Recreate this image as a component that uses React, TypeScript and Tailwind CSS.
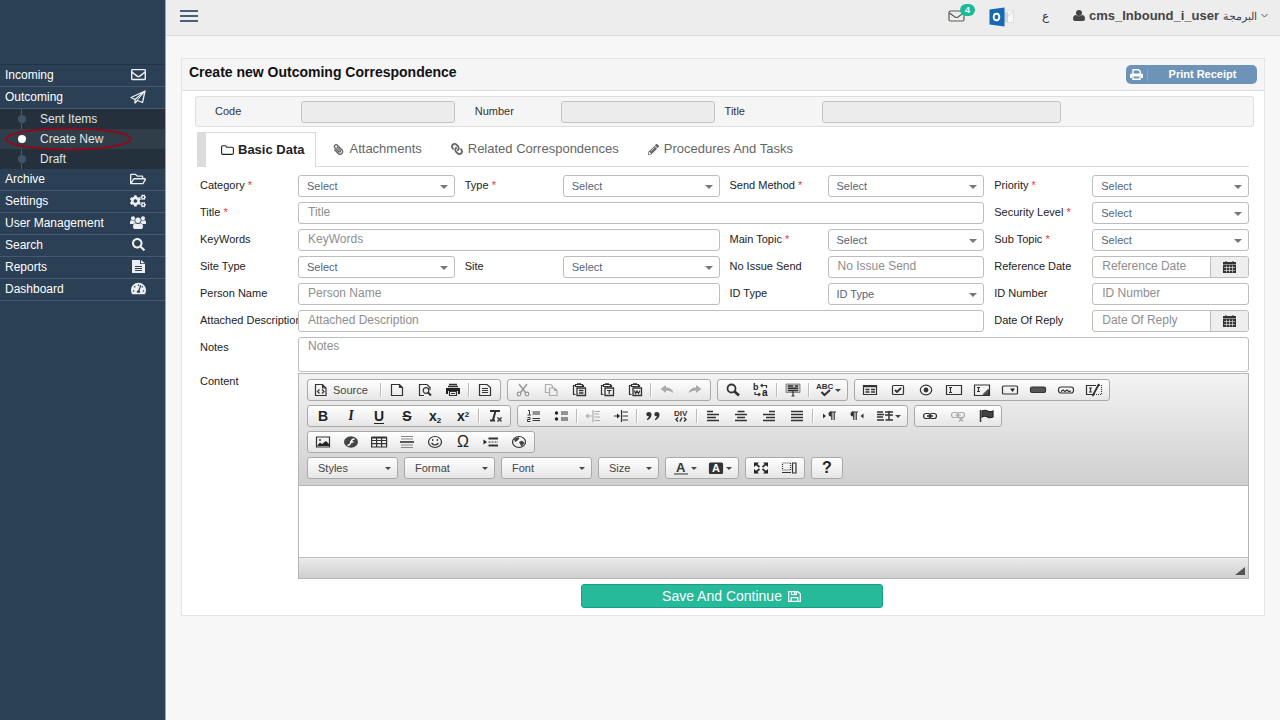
import React from 'react';
import {
  FaCogs,
  FaLink,
  FaPaperclip,
  FaPencilAlt,
  FaRegEnvelope,
  FaRegFolderOpen,
  FaSearch,
  FaTachometerAlt,
} from 'react-icons/fa';

/* ---------- Small icons ---------- */

const PlaneIcon = () => (
  <svg width="16" height="14" viewBox="0 0 16 14" fill="none" stroke="currentColor" strokeWidth="1.300" strokeLinejoin="round">
    <path d="M15 1L1 7.500l4 2V13l2.500-2.500 5 2zM15 1L5 9.500" />
    <path d="M15 1L7 10.500" strokeWidth="1" />
  </svg>
);

const UsersIcon = () => (
  <svg width="16" height="13" viewBox="0 0 16 13" fill="currentColor">
    <circle cx="3" cy="2.300" r="2" />
    <circle cx="13" cy="2.300" r="2" />
    <circle cx="8" cy="4.200" r="2.700" />
    <path d="M0 8V6q0-2 1.500-1.800 1.500.8 3 0Q4.500 6 5.500 7 4 7 3.500 8zM16 8V6q0-2-1.500-1.800-1.500.8-3 0 0 1.800-1 2.800 1.500 0 2 1z" />
    <path d="M3 11q0-3.700 2.300-3.700 2.700 1.600 5.400 0Q13 7.300 13 11q0 2-1.800 2H4.800Q3 13 3 11z" />
  </svg>
);

const FileIcon = () => (
  <svg width="14" height="13" viewBox="0 0 14 13">
    <path d="M1 0h8v4h5v9H1zM10 0l4 3.200h-4z" fill="currentColor" />
    <path d="M4 6.500h7M4 8.500h7M4 10.500h7" stroke="#2b3f55" />
  </svg>
);

const UserIcon = () => (
  <svg width="12" height="11" viewBox="0 0 12 11" fill="currentColor">
    <circle cx="6" cy="3" r="3" />
    <path d="M0 9q0-4 3-4 3 2.500 6 0 3 0 3 4 0 2-2 2H2q-2 0-2-2z" />
  </svg>
);

const PrintIcon = () => (
  <svg width="13" height="11" viewBox="0 0 13 11">
    <path d="M3 5V.7h5.500l1.800 1.800V5" fill="none" stroke="currentColor" strokeWidth="1.400" />
    <path d="M0 9V6q0-1.500 1.500-1.500h10Q13 4.500 13 6v3h-2V7.500H2V9z" fill="currentColor" />
    <path d="M3 7.500v2.800h7V7.500" fill="none" stroke="currentColor" strokeWidth="1.400" />
  </svg>
);

const FolderIcon = () => (
  <svg width="13" height="10" viewBox="0 0 13 10" fill="none" stroke="currentColor" strokeWidth="1.100">
    <path d="M.6 8V2Q.6.8 1.800.8h2.400q1 0 1.200 1.400h5.400q1.600 0 1.600 1.300V8q0 1.400-1.600 1.400H2Q.6 9.400.6 8z" />
  </svg>
);

const SaveIcon = () => (
  <svg width="13" height="11" viewBox="0 0 13 11" fill="none" stroke="currentColor" strokeWidth="1.200">
    <path d="M.7.7h9l2.600 2.200v7.400H.7z" />
    <path d="M3.200 10V6.700h6.600V10M3.500.7v3h5v-3" />
    <path d="M6 .8h1.500v2.400H6z" fill="currentColor" stroke="none" />
  </svg>
);

/* ---------- Sidebar ---------- */

interface MenuItem {
  label: string;
  icon: React.ReactNode;
  children?: string[];
}

const menu: MenuItem[] = [
  { label: 'Incoming', icon: <FaRegEnvelope size={15} /> },
  {
    label: 'Outcoming',
    icon: <PlaneIcon />,
    children: ['Sent Items', 'Create New', 'Draft'],
  },
  { label: 'Archive', icon: <FaRegFolderOpen size={16} /> },
  { label: 'Settings', icon: <FaCogs size={16} /> },
  { label: 'User Management', icon: <UsersIcon /> },
  { label: 'Search', icon: <FaSearch size={13} /> },
  { label: 'Reports', icon: <FileIcon /> },
  { label: 'Dashboard', icon: <FaTachometerAlt size={15} /> },
];

const SubMenu: React.FC<{ items: string[]; active: string }> = ({ items, active }) => (
  <ul className="relative bg-[#24303c]">
    <li className="absolute inset-y-0 left-[21px] w-px bg-[#4a5c6c]" aria-hidden="true" />
    {items.map((item) => (
      <li key={item} className={item === active ? 'relative bg-[#303e4a]' : 'relative'}>
        <a href="#" className="flex h-5 items-center gap-3.5 pl-[18px] text-[#e0e4e8]">
          <span
            className={
              item === active
                ? 'size-2 rounded-full bg-white'
                : 'size-2 rounded-full bg-[#425567]'
            }
          />
          {item}
        </a>
        {item === active && (
          <svg
            className="pointer-events-none absolute -top-0.5 left-[5px]"
            width="127"
            height="24"
            viewBox="0 0 127 24"
            fill="none"
            stroke="#8c0a1c"
            strokeWidth="2"
          >
            <ellipse cx="63.5" cy="12" rx="62" ry="10.5" />
          </svg>
        )}
      </li>
    ))}
  </ul>
);

const Sidebar: React.FC = () => (
  <aside className="w-[166px] shrink-0 border-r border-[#9aa6b2] bg-[#2b3f55] pt-16 text-xs text-white">
    <nav>
      <ul className="border-t border-[#22344a]">
        {menu.map((item) => (
          <li key={item.label}>
            <a
              href="#"
              className="flex h-[22px] items-center justify-between border-b border-[#435a70] pr-[19px] pb-0.5 pl-[5px]"
            >
              {item.label}
              <span className="flex w-4 justify-center text-[#eceff2]">{item.icon}</span>
            </a>
            {item.children && <SubMenu items={item.children} active="Create New" />}
          </li>
        ))}
      </ul>
    </nav>
  </aside>
);

/* ---------- Top bar ---------- */

const OutlookLogo = () => (
  <svg width="25" height="22" viewBox="0 0 25 22">
    <path d="M15 5.500h9.500v12H15z" fill="#f8f8f8" stroke="#e0e0e0" />
    <path d="M16 6.500l4 4 4.500-4.500" fill="none" stroke="#d4d4d4" />
    <path d="M15 7h4v10h-4z" fill="#cfd4da" />
    <path d="M.5 4.500L15.500 2.500v19L.5 19.500z" fill="#1568b3" />
    <ellipse cx="7.500" cy="12" rx="2.800" ry="3.300" fill="none" stroke="#fff" strokeWidth="1.900" />
  </svg>
);

const TopBar: React.FC = () => (
  <header className="flex h-9 items-center justify-between border-b border-[#dadde0] bg-[#ededed] pr-3 pb-1 pl-3.5">
    <button type="button" aria-label="Toggle menu" className="text-[#4a6078]">
      <svg width="18" height="12" viewBox="0 0 18 12" fill="currentColor">
        <path d="M0 0h18v2H0zM0 5h18v2H0zM0 10h18v2H0z" />
      </svg>
    </button>
    <div className="flex items-center">
      <button type="button" aria-label="Messages" className="relative mr-6">
        <svg width="17" height="12" viewBox="0 0 17 12" fill="none" stroke="#5c5a50" strokeWidth="1.200">
          <rect x="1" y="1" width="15" height="10" rx="1.500" />
          <path d="M1.500 3l5.500 4q1.500 1 3 0l5.500-4" />
        </svg>
        <span className="absolute -top-1.5 left-3 flex h-3 w-[15px] items-center justify-center rounded-full bg-[#1abb9c] text-[9px] leading-3 font-bold text-white">
          4
        </span>
      </button>
      <a href="#" aria-label="Outlook" className="mr-7">
        <OutlookLogo />
      </a>
      <a href="#" className="mr-6 text-xs text-[#333]">
        ع
      </a>
      <button type="button" className="flex items-center gap-1 text-[#444]">
        <UserIcon />
        <span className="text-[13px] leading-4 font-bold">cms_Inbound_i_user</span>
        <span className="text-[11px] leading-4">البرمجة</span>
        <svg width="7" height="5" viewBox="0 0 7 5" fill="none" stroke="#555">
          <path d="M.5 1l3 3 3-3" />
        </svg>
      </button>
    </div>
  </header>
);

/* ---------- Form fields ---------- */

interface FieldProps {
  id: string;
  label: string;
  required?: boolean;
  className?: string;
  children: React.ReactNode;
}

const Field: React.FC<FieldProps> = ({ id, label, required, className = '', children }) => (
  <div className={`flex min-w-0 ${className}`}>
    <label
      htmlFor={id}
      className="w-[98px] shrink-0 pt-0.5 text-[11px] leading-4 whitespace-nowrap text-[#222]"
    >
      {label} {required && <span className="text-[#e33]">*</span>}
    </label>
    {children}
  </div>
);

const inputClass =
  'h-[22px] w-full min-w-0 flex-1 rounded-[3px] border border-[#bdbdbd] bg-white px-[9px] pb-0.5 text-xs text-[#555] outline-none placeholder:text-[#8e8e8e]';

const TextField: React.FC<Omit<FieldProps, 'children'>> = (props) => (
  <Field {...props}>
    <input id={props.id} type="text" placeholder={props.label} className={inputClass} />
  </Field>
);

const SelectField: React.FC<Omit<FieldProps, 'children'> & { value?: string }> = ({
  value = 'Select',
  ...props
}) => (
  <Field {...props}>
    <div className="relative min-w-0 flex-1">
      <select
        id={props.id}
        className="block h-[22px] w-full appearance-none rounded-[3px] border border-[#bdbdbd] bg-white px-2 pt-px text-[11px] text-[#56657a] outline-none"
      >
        <option>{value}</option>
      </select>
      <svg
        className="pointer-events-none absolute top-2.5 right-[7px]"
        width="8"
        height="4"
        viewBox="0 0 8 4"
        fill="#777"
      >
        <path d="M0 0h8L4 4z" />
      </svg>
    </div>
  </Field>
);

const DateField: React.FC<Omit<FieldProps, 'children'>> = (props) => (
  <Field {...props}>
    <div className="flex h-[22px] min-w-0 flex-1 overflow-hidden rounded-[3px] border border-[#bdbdbd]">
      <input
        id={props.id}
        type="text"
        placeholder={props.label}
        className="w-full min-w-0 flex-1 px-[9px] pb-0.5 text-xs outline-none placeholder:text-[#8e8e8e]"
      />
      <button
        type="button"
        aria-label={`Pick ${props.label}`}
        className="flex w-[38px] items-center justify-center border-l border-[#bdbdbd] bg-[#eee]"
      >
        <svg width="13" height="12" viewBox="0 0 13 12">
          <path d="M0 1h13v2.500H0zM2.500 0h1v1h-1zM9.500 0h1v1h-1zM0 4h13v8H0z" fill="#333" />
          <path
            d="M1 6.500h11M1 9.500h11M3.500 4.500v7M6.500 4.500v7M9.500 4.500v7"
            stroke="#ddd"
            strokeWidth=".7"
          />
        </svg>
      </button>
    </div>
  </Field>
);

/* ---------- Rich text editor ---------- */

const Glyph: React.FC<{ children: React.ReactNode }> = ({ children }) => (
  <svg
    width="16"
    height="16"
    viewBox="0 0 16 16"
    fill="none"
    stroke="#333"
    strokeWidth="1.200"
    className="shrink-0 overflow-visible"
  >
    {children}
  </svg>
);

const clipboard = <path d="M4.500 12.500h-2v-9h2M11.500 3.500h1V5M4.500 2.500h7v2h-7zM6 1.800h4" />;

const icons: Record<string, React.ReactNode> = {
  source: (
    <>
      <path d="M2.500 2.500h7l3.500 3.500v7.500H2.500zM9.500 2.500V6H13" />
      <path d="M6.500 7.500l-2 2 2 2M9 7.500l2 2-2 2" />
    </>
  ),
  newpage: <path d="M2.500 2.500h8l3 3v8h-11zM10.500 2.500v3h3" />,
  preview: (
    <>
      <path d="M13 8V5.500l-3-3H2.500v11H7" />
      <circle cx="9" cy="8.500" r="2.800" />
      <path d="M11 10.500l3 3" strokeWidth="2" />
    </>
  ),
  print: (
    <>
      <path d="M4 2.500h8M3 4.500h10" strokeWidth="1.500" />
      <path d="M1 6h14v6h-2V9H3v3H1z" fill="#222" stroke="none" />
      <path d="M4.500 9.500h7v4h-7zM6 11.500h4" />
    </>
  ),
  template: <path d="M2.500 2.500H10l3.500 3v8h-11zM5 6.500h6M5 8.500h6M5 10.500h6" />,
  cut: (
    <g stroke="#999">
      <path d="M4 2l6.500 8.500M12 2L5.500 10.500" strokeWidth="1.500" />
      <circle cx="4" cy="12" r="1.800" />
      <circle cx="12" cy="12" r="1.800" />
    </g>
  ),
  copy: <path stroke="#aaa" d="M6 10.500H2.500v-8h5L9.500 4v2M6.500 6h5l2.500 2.500v5H6.500zM11.500 6v2.500H14" />,
  paste: (
    <>
      {clipboard}
      <path d="M6 6h8.500v7.500H6zM8 8.500h4.500M8 11h4.500" strokeWidth="1.300" />
    </>
  ),
  pastetext: (
    <>
      {clipboard}
      <path d="M6 6h8.500v7.500H6z" strokeWidth="1.300" />
      <path d="M8 8.500h4.500M10.200 8.500V12" />
    </>
  ),
  pasteword: (
    <>
      {clipboard}
      <path d="M6 6h8.500v7.500H6z" strokeWidth="1.300" />
      <path d="M7.500 8.500l1 3 1.500-2.500 1.500 2.500 1.500-3" />
    </>
  ),
  undo: (
    <path d="M1.500 7L7 3v2.500q6 0 7.500 5.500Q11.500 8.500 7 8.500V11z" fill="#aaa" stroke="none" />
  ),
  redo: (
    <path d="M14.500 7L9 3v2.500q-6 0-7.500 5.500Q4.500 8.500 9 8.500V11z" fill="#aaa" stroke="none" />
  ),
  find: (
    <>
      <circle cx="6.500" cy="6.500" r="4" strokeWidth="1.800" />
      <path d="M9.500 9.500l4.500 4" strokeWidth="2.800" />
    </>
  ),
  replace: (
    <>
      <text x="0" y="8" fontSize="9" fontWeight="bold" fill="#222" stroke="none">b</text>
      <text x="9" y="14" fontSize="10" fontWeight="bold" fill="#222" stroke="none">a</text>
      <path d="M13.500 6V3.500H8M9.500 2L8 3.500 9.500 5M2 10v2.500h5M5.500 11L7 12.500 5.500 14" />
    </>
  ),
  selectall: (
    <>
      <path d="M1 2h14v8.500H1z" fill="#bbb" stroke="#777" strokeWidth=".8" />
      <path d="M3 4h5M3 6.300h10M3 8.500h10M10 4h3" strokeWidth="1.400" />
      <path d="M8 8v6M6.500 14h3" />
    </>
  ),
  spell: (
    <>
      <text x="-1" y="7" fontSize="8" fontWeight="bold" fill="#333" stroke="none">ABC</text>
      <path d="M4.500 10l3 3 5.500-5" strokeWidth="2" />
    </>
  ),
  form: (
    <>
      <path d="M1.500 3.500h13v9h-13z" />
      <path d="M1.500 4.500h13M3.500 7.500h4M9 7.500h4M3.500 10h4M9 10h4" strokeWidth="1.600" />
    </>
  ),
  checkbox: (
    <>
      <rect x="2.500" y="3.500" width="11" height="9" rx="1" />
      <path d="M5 8l2 2 4-4" strokeWidth="1.800" />
    </>
  ),
  radio: (
    <>
      <ellipse cx="8" cy="8" rx="5.700" ry="4.800" />
      <circle cx="8" cy="8" r="2.400" fill="#333" stroke="none" />
    </>
  ),
  textfield: <path d="M.5 3.500h15v9H.5zM3 5.500h3M4.500 5.500v5M3 10.500h3" />,
  textarea: (
    <>
      <path d="M.5 3h15v10.500H.5zM3 5.500h3M4.500 5.500v4M3 9.500h3" />
      <path d="M14.500 8v5h-5zM9 12.500l5.500-5.500" fill="#555" strokeWidth="1" />
    </>
  ),
  select: (
    <>
      <rect x=".5" y="4" width="15" height="8" rx="1" />
      <path d="M8 6.500h5L10.500 10z" fill="#222" stroke="none" />
    </>
  ),
  button: <rect x=".5" y="5" width="15" height="5.500" rx="1.500" fill="#555" />,
  imagebutton: (
    <>
      <rect x=".5" y="5" width="15" height="6" rx="2.500" />
      <path d="M3 9.500l2-1.500 2 1.500 2-1.500 2 1.500 2-.5" />
    </>
  ),
  hidden: (
    <>
      <path d="M8 12.500H.5V3.500H10M3 6h3M4.500 6v4M3 10h3" />
      <path d="M11 3.500h4.500v9H8" strokeDasharray="1 1" />
      <path d="M13 2L6.500 14" strokeWidth="1.800" />
    </>
  ),
  clearformat: (
    <>
      <path d="M3 3h10M8.500 3L6 12M3 12.500h5" strokeWidth="2" />
      <path d="M10.500 9.500l4 4M14.500 9.500l-4 4" strokeWidth="1.400" />
    </>
  ),
  numbered: (
    <>
      <path d="M7.500 4h7.500M7.500 6h7.500M7.500 10.500h7.500M7.500 12.500h7.500" />
      <path d="M3 2.500h1.500V6.500M2.500 7h3.500M2.500 9.500H5v2H2.500V13.500H5.500" strokeWidth="1" />
    </>
  ),
  bulleted: (
    <>
      <path d="M8 4h7M8 6h7M8 10h7M8 12h7" />
      <circle cx="3.500" cy="5" r="1.700" fill="#222" stroke="none" />
      <circle cx="3.500" cy="11" r="1.700" fill="#222" stroke="none" />
    </>
  ),
  outdent: (
    <path stroke="#aaa" d="M8 2v12M9.500 3.500H15M9.500 6H14M9.500 9H15M9.500 12.500H15M1 8h6M3.500 6L1.500 8l2 2" />
  ),
  indent: (
    <>
      <path d="M8.500 2v12M9.500 4H15M9.500 8H15M9.500 12H15M1 8h5" />
      <path d="M4 5.500L7 8l-3 2.500z" fill="#222" stroke="none" />
    </>
  ),
  quote: (
    <path
      d="M3.800 4a2.500 2.200 0 00-2.500 2.200Q1.300 8.300 4 8.300 3.500 10 2 11v1.300Q6.500 10.500 6.500 6.500 6.500 4 3.800 4zM11.800 4a2.500 2.200 0 00-2.500 2.200q0 2.100 2.700 2.100-.5 1.700-2 2.700v1.300q4.500-1.800 4.500-5.800Q14.500 4 11.800 4z"
      fill="#333"
      stroke="none"
    />
  ),
  div: (
    <>
      <text x="1" y="8" fontSize="8" fontWeight="bold" fill="#333" stroke="none">DIV</text>
      <path d="M5 9.500L3 11.500l2 2M11 9.500l2 2-2 2M9 9.500l-2 4" strokeWidth="1.400" />
    </>
  ),
  left: <path d="M2 3.500h6M2 6.500h12M2 9.500h9M2 12.500h12" strokeWidth="1.700" />,
  center: <path d="M4.500 3.500h7M2 6.500h12M4 9.500h8M2 12.500h12" strokeWidth="1.700" />,
  right: <path d="M8 3.500h6M2 6.500h12M5 9.500h9M2 12.500h12" strokeWidth="1.700" />,
  justify: <path d="M2 3.500h12M2 6.500h12M2 9.500h12M2 12.500h12" strokeWidth="1.700" />,
  ltr: (
    <>
      <path d="M2 5.500L5 8l-3 2.500zM10.500 3.500H10a2.300 2.300 0 000 5h.5z" fill="#333" stroke="none" />
      <path d="M9 4h6M10.800 4v8M13.200 4v8" />
    </>
  ),
  rtl: (
    <>
      <path d="M14.500 5.500L11.500 8l3 2.500zM4.500 3.500H4a2.300 2.300 0 000 5h.5z" fill="#333" stroke="none" />
      <path d="M3 4h6M4.800 4v8M7.200 4v8" />
    </>
  ),
  language: (
    <path d="M0 4h6M0 6.500h7M0 9h6M0 12h7M8 4h8M8 7h8M12 3v9M8.500 12H16" strokeWidth="1.500" />
  ),
  link: (
    <>
      <rect x="1.500" y="5.500" width="7" height="5" rx="2.500" />
      <rect x="7.500" y="5.500" width="7" height="5" rx="2.500" />
      <path d="M5 8h6" strokeWidth="1.600" />
    </>
  ),
  unlink: (
    <g stroke="#aaa">
      <rect x="1.500" y="4.500" width="7" height="5" rx="2.500" />
      <rect x="7.500" y="4.500" width="7" height="5" rx="2.500" />
      <path d="M5 7h6M9 9.500l4 4M13 9.500l-4 4" />
    </g>
  ),
  flag: (
    <>
      <path d="M2.500 2v12" strokeWidth="1.500" />
      <path d="M4 3q3-1.500 5.500 0T15 3v6q-3 1.500-5.500 0T4 9z" fill="#444" stroke="#222" />
    </>
  ),
  image: (
    <>
      <path d="M1.500 3h13v10h-13z" />
      <path d="M2 12l3-3.500 2 1.500 4-3 3 3v2z" fill="#222" stroke="none" />
      <circle cx="5" cy="6" r="1" fill="#333" stroke="none" />
    </>
  ),
  flash: (
    <>
      <ellipse cx="8" cy="8" rx="7" ry="5.800" fill="#444" stroke="none" />
      <path d="M11.500 5q-3 0-3.500 3t-3.500 3.500M7 8h3.500" stroke="#fff" strokeWidth="1.500" />
    </>
  ),
  table: (
    <>
      <path d="M.6 3.500h15v9.500h-15zM.6 6.500h15M.6 9.700h15M5.600 3.500V13M10.600 3.500V13" />
      <path d="M.6 3.500h15" strokeWidth="2" />
    </>
  ),
  rule: (
    <>
      <path d="M2 2.500h12M2 5h12M2 11h12M2 13.500h12" stroke="#888" />
      <path d="M1 8h14" strokeWidth="1.600" />
    </>
  ),
  smiley: (
    <>
      <ellipse cx="8" cy="8" rx="6.500" ry="5.500" />
      <path d="M4.500 9q3.500 4 7 0M5.700 5v2M10.300 5v2" />
    </>
  ),
  pagebreak: (
    <>
      <path d="M.5 5.500L4 8 .5 10.500z" fill="#222" stroke="none" />
      <path d="M5.500 4.500H15M5.500 11.500H15" strokeWidth="2" />
      <path d="M5.500 8H15" strokeDasharray="2 1" />
    </>
  ),
  globe: (
    <>
      <ellipse cx="8" cy="8" rx="6.500" ry="5.500" />
      <path d="M3 5l4-2 1.500 1.500L6 7 4 8zM8 8l3-1.500L13.500 9 10.500 12.500 9 10z" fill="#444" stroke="none" />
    </>
  ),
  maximize: (
    <>
      <path d="M3 4l3.500 3M13 4L9.500 7M3 12l3.500-3M13 12L9.500 9" strokeWidth="1.800" />
      <path d="M1 2.500h5L1 7zM15 2.500h-5L15 7zM1 13.500h5L1 9zM15 13.500h-5L15 9z" fill="#222" stroke="none" />
    </>
  ),
  blocks: (
    <>
      <path d="M1.500 3h8v7h-8z" strokeDasharray="1 1" />
      <path d="M1 12.500h9M11.500 3H15v10h-3.500z" />
    </>
  ),
  textcolor: (
    <>
      <text x="3" y="12" fontSize="13" fontWeight="bold" fill="#333" stroke="none">A</text>
      <path d="M1 14h14" stroke="#666" strokeWidth="1.400" />
    </>
  ),
  bgcolor: (
    <>
      <rect x="1.500" y="3" width="13" height="10.500" rx="1" fill="#333" />
      <text x="4" y="12" fontSize="11" fontWeight="bold" fill="#fff" stroke="none">A</text>
    </>
  ),
};

const letters: Record<string, React.ReactNode> = {
  bold: <span className="font-bold">B</span>,
  italic: <span className="font-serif font-bold italic">I</span>,
  underline: <span className="font-bold underline underline-offset-2">U</span>,
  strike: <span className="font-bold line-through">S</span>,
  subscript: <span className="font-bold">x<sub className="text-[8px]">2</sub></span>,
  superscript: <span className="font-bold">x<sup className="text-[8px]">2</sup></span>,
  omega: <span className="text-base">Ω</span>,
  help: <span className="text-base font-bold">?</span>,
};

const Caret = () => (
  <svg width="6" height="3" viewBox="0 0 6 3" fill="#444" className="shrink-0">
    <path d="M0 0h6L3 3z" />
  </svg>
);

const ToolButton: React.FC<{ name: string }> = ({ name }) => {
  if (name === '|') {
    return <span className="mx-px h-3.5 w-0.5 border-l border-[#bbb] bg-white" />;
  }
  if (name === 'source') {
    return (
      <button type="button" className="flex w-[70px] items-center gap-1 pl-1 text-[11px] text-[#444]">
        <Glyph>{icons.source}</Glyph>
        Source
      </button>
    );
  }
  const hasMenu = ['spell', 'language', 'textcolor', 'bgcolor'].includes(name);
  return (
    <button
      type="button"
      aria-label={name}
      className={`flex h-full items-center justify-center gap-0.5 text-sm leading-4 text-[#222] ${hasMenu ? 'w-[35px]' : 'w-7'}`}
    >
      {letters[name] ?? <Glyph>{icons[name]}</Glyph>}
      {hasMenu && <Caret />}
    </button>
  );
};

const ToolGroup: React.FC<{ items: string[] }> = ({ items }) => (
  <div className="flex h-[22px] items-center rounded-[3px] border border-[#a9a9a9] bg-linear-to-b from-white to-[#e6e6e6] px-px">
    {items.map((name, i) => (
      <ToolButton key={i} name={name} />
    ))}
  </div>
);

const toolRows: string[][][] = [
  [
    ['source', '|', 'newpage', 'preview', 'print', '|', 'template'],
    ['cut', 'copy', 'paste', 'pastetext', 'pasteword', '|', 'undo', 'redo'],
    ['find', 'replace', '|', 'selectall', '|', 'spell'],
    ['form', 'checkbox', 'radio', 'textfield', 'textarea', 'select', 'button', 'imagebutton', 'hidden'],
  ],
  [
    ['bold', 'italic', 'underline', 'strike', 'subscript', 'superscript', '|', 'clearformat'],
    [
      'numbered', 'bulleted', '|', 'outdent', 'indent', '|', 'quote', 'div', '|',
      'left', 'center', 'right', 'justify', '|', 'ltr', 'rtl', 'language',
    ],
    ['link', 'unlink', 'flag'],
  ],
  [['image', 'flash', 'table', 'rule', 'smiley', 'omega', 'pagebreak', 'globe']],
];

const Combo: React.FC<{ label: string; small?: boolean }> = ({ label, small }) => (
  <button
    type="button"
    className={`flex h-[22px] items-center justify-between rounded-[3px] border border-[#a9a9a9] bg-linear-to-b from-white to-[#e6e6e6] pr-1.5 pl-2.5 text-[11px] text-[#444] ${small ? 'w-[61px]' : 'w-[91px]'}`}
  >
    {label}
    <Caret />
  </button>
);

const Editor: React.FC = () => (
  <div className="min-w-0 flex-1 border border-[#b6b6b6]">
    <div className="flex flex-col gap-1 border-b border-[#b6b6b6] bg-linear-to-b from-[#f3f3f3] to-[#cfcfcf] px-2 pt-[5px] pb-1.5">
      {toolRows.map((groups, i) => (
        <div key={i} className="flex flex-wrap gap-1.5">
          {groups.map((items, j) => (
            <ToolGroup key={j} items={items} />
          ))}
        </div>
      ))}
      <div className="flex flex-wrap gap-1.5">
        <Combo label="Styles" />
        <Combo label="Format" />
        <Combo label="Font" />
        <Combo label="Size" small />
        <ToolGroup items={['textcolor', 'bgcolor']} />
        <ToolGroup items={['maximize', 'blocks']} />
        <ToolGroup items={['help']} />
      </div>
    </div>
    <textarea id="content" className="block h-[71px] w-full resize-none bg-white p-2 text-xs outline-none" />
    <div className="flex h-[21px] items-end justify-end border-t border-[#bfbfbf] bg-linear-to-b from-[#ebebeb] to-[#cfcfcf] p-[3px]">
      <svg width="10" height="8" viewBox="0 0 10 8" fill="#555">
        <path d="M10 0v8H0z" />
      </svg>
    </div>
  </div>
);

/* ---------- Page ---------- */

const tabs = [
  { label: 'Attachments', icon: <FaPaperclip size={11} className="-scale-x-100" /> },
  { label: 'Related Correspondences', icon: <FaLink size={12} className="-scale-x-100" /> },
  { label: 'Procedures And Tasks', icon: <FaPencilAlt size={11} /> },
];

const readOnlyClass = 'h-[22px] w-full min-w-0 rounded-[3px] border border-[#c4c4c4] bg-[#ececec] px-2 text-xs';

export default function App() {
  return (
    <div className="flex min-h-screen bg-[#f7f7f7] font-['Liberation_Sans',Arial,sans-serif]">
      <Sidebar />
      <div className="min-w-0 flex-1">
        <TopBar />
        <main className="px-[15px] pt-[22px]">
          <section className="border border-[#e4e4e4] bg-white">
            <div className="flex h-8 items-center justify-between border-b border-[#dcdcdc] bg-[#f5f5f5] px-[7px]">
              <h1 className="pb-1.5 text-sm leading-5 font-bold text-[#111]">
                Create new Outcoming Correspondence
              </h1>
              <button
                type="button"
                className="flex h-[19px] w-[131px] items-center rounded-[5px] bg-[#6d94b8] text-[11px] font-bold text-white"
              >
                <span className="flex h-3 w-[22px] items-center justify-center border-r border-[#86a8c6]">
                  <PrintIcon />
                </span>
                <span className="flex-1 pb-px">Print Receipt</span>
              </button>
            </div>

            <form className="pt-[5px] pr-2.5 pb-[7px] pl-[13px]" onSubmit={(e) => e.preventDefault()}>
              <div className="grid h-[31px] grid-cols-[86px_154fr_106px_154fr_107px_240fr_192fr] items-center rounded-[3px] border border-[#dedede] bg-[#f5f5f5] pl-[19px] text-[11px] text-[#333]">
                <label htmlFor="code">Code</label>
                <input id="code" readOnly className={readOnlyClass} />
                <label htmlFor="number" className="pl-5">Number</label>
                <input id="number" readOnly className={readOnlyClass} />
                <label htmlFor="docTitle" className="pl-2.5">Title</label>
                <input id="docTitle" readOnly className={readOnlyClass} />
              </div>

              <div role="tablist" className="mt-[5px] mr-[5px] ml-0.5 flex h-[35px] text-[13px] text-[#666]">
                <span className="w-[9px] bg-[#dcdcdc]" />
                <button
                  type="button"
                  role="tab"
                  aria-selected="true"
                  className="flex items-center gap-1 border-t border-r border-[#d8d8d8] pr-[11px] pl-[15px] font-bold text-[#222]"
                >
                  <FolderIcon />
                  Basic Data
                </button>
                <div className="flex flex-1 gap-[29px] border-b border-[#dcdcdc] pl-[17px]">
                  {tabs.map((tab) => (
                    <button key={tab.label} type="button" role="tab" className="flex items-center gap-[5px]">
                      {tab.icon}
                      {tab.label}
                    </button>
                  ))}
                </div>
              </div>

              <div className="mt-2 mr-[5px] ml-[5px] grid grid-cols-4 gap-x-2.5 gap-y-[5px]">
                <SelectField id="category" label="Category" required />
                <SelectField id="type" label="Type" required />
                <SelectField id="sendMethod" label="Send Method" required />
                <SelectField id="priority" label="Priority" required />

                <TextField id="title" label="Title" required className="col-span-3" />
                <SelectField id="security" label="Security Level" required />

                <TextField id="keywords" label="KeyWords" className="col-span-2" />
                <SelectField id="mainTopic" label="Main Topic" required />
                <SelectField id="subTopic" label="Sub Topic" required />

                <SelectField id="siteType" label="Site Type" />
                <SelectField id="site" label="Site" />
                <TextField id="noIssueSend" label="No Issue Send" />
                <DateField id="referenceDate" label="Reference Date" />

                <TextField id="personName" label="Person Name" className="col-span-2" />
                <SelectField id="idType" label="ID Type" value="ID Type" />
                <TextField id="idNumber" label="ID Number" />

                <TextField id="attached" label="Attached Description" className="col-span-3" />
                <DateField id="replyDate" label="Date Of Reply" />

                <Field id="notes" label="Notes" className="col-span-4">
                  <textarea
                    id="notes"
                    placeholder="Notes"
                    className="block h-[35px] min-w-0 flex-1 resize-none rounded-[3px] border border-[#bdbdbd] px-[9px] text-xs outline-none placeholder:text-[#8e8e8e]"
                  />
                </Field>
              </div>

              <div className="mt-px mr-[5px] ml-[5px]">
                <Field id="content" label="Content" className="[&>label]:pt-0">
                  <Editor />
                </Field>
              </div>

              <div className="mt-[5px] flex justify-center pl-3.5">
                <button
                  type="submit"
                  className="flex h-6 w-[302px] items-center justify-center gap-1.5 rounded-[3px] border border-[#169f85] bg-[#26b99a] text-sm text-white"
                >
                  Save And Continue
                  <SaveIcon />
                </button>
              </div>
            </form>
          </section>
        </main>
      </div>
    </div>
  );
}
